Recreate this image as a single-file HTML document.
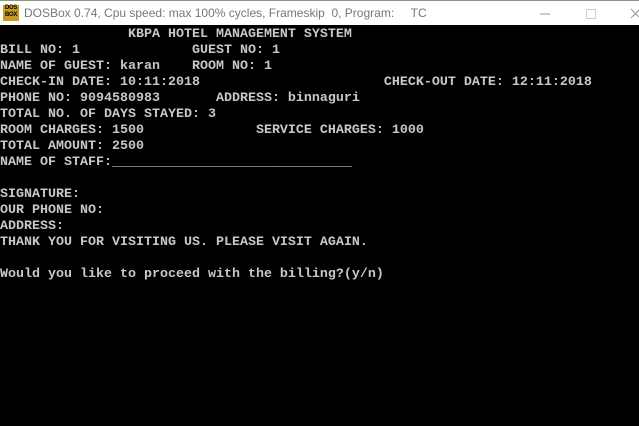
<!DOCTYPE html>
<html><head><meta charset="utf-8"><style>
html,body{margin:0;padding:0;width:639px;height:426px;overflow:hidden;background:#000}
#tb{position:absolute;left:0;top:0;width:639px;height:25px;background:#fff;border-top:1px solid #8a9a80;box-sizing:border-box;z-index:2}
#icon{position:absolute;left:3px;top:4px;width:16px;height:16px;background:#c89a20;font:bold 6px/7px "Liberation Sans",sans-serif;color:#000;text-align:center;letter-spacing:-0.3px}
#title{position:absolute;left:24px;top:5px;font:12px "Liberation Sans",sans-serif;color:#777;white-space:pre}
#con{position:absolute;left:0;top:27px;width:639px;height:399px;background:#000}
pre{margin:0;font-family:"Liberation Mono",monospace;font-size:13.33px;line-height:16px;color:#c8c8c8;font-weight:bold;letter-spacing:0}
</style></head><body>
<div id="tb">
<div id="icon">DOS<br>BOX</div>
<div id="title">DOSBox 0.74, Cpu speed: max 100% cycles, Frameskip  0, Program:     TC</div>
<svg style="position:absolute;left:500px;top:4px" width="139" height="18">
<line x1="40" y1="9" x2="50" y2="9" stroke="#999" stroke-width="1"/>
<rect x="86.5" y="4.5" width="9" height="9" fill="none" stroke="#ccc"/>
<line x1="131" y1="4" x2="140" y2="13" stroke="#999"/>
<line x1="140" y1="4" x2="131" y2="13" stroke="#999"/>
</svg>
</div>
<div id="con"><pre>                KBPA HOTEL MANAGEMENT SYSTEM
BILL NO: 1              GUEST NO: 1
NAME OF GUEST: karan    ROOM NO: 1
CHECK-IN DATE: 10:11:2018                       CHECK-OUT DATE: 12:11:2018
PHONE NO: 9094580983       ADDRESS: binnaguri
TOTAL NO. OF DAYS STAYED: 3
ROOM CHARGES: 1500              SERVICE CHARGES: 1000
TOTAL AMOUNT: 2500
NAME OF STAFF:______________________________

SIGNATURE:
OUR PHONE NO:
ADDRESS:
THANK YOU FOR VISITING US. PLEASE VISIT AGAIN.

Would you like to proceed with the billing?(y/n)</pre></div>
</body></html>
